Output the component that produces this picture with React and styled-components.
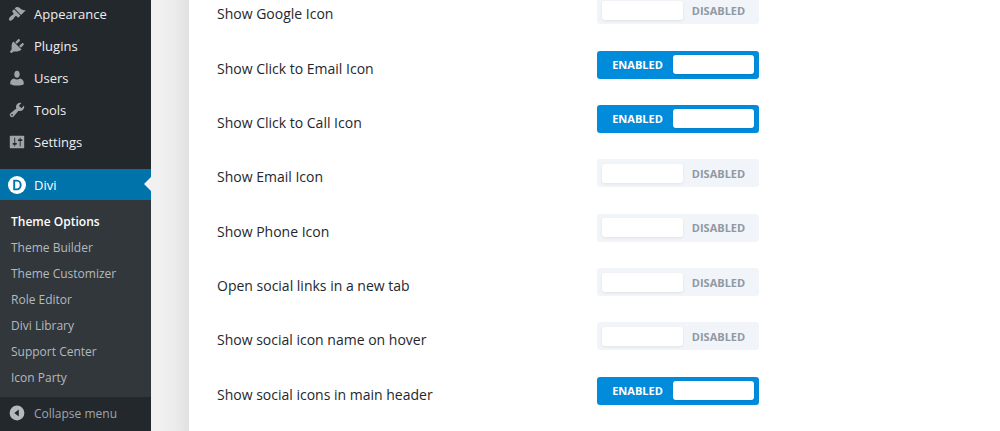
import React from "react";

import styled, { createGlobalStyle } from "styled-components";

const GlobalStyle = createGlobalStyle`
  *, *::before, *::after {
    box-sizing: border-box;
  }

  body {
    margin: 0;
    background: #f1f1f1;
    font-family: "Open Sans", "Noto Sans", sans-serif;
    overflow: hidden;
  }
`;

const Page = styled.div`
  display: flex;
  min-height: 100vh;
`;

const Sidebar = styled.nav`
  flex: 0 0 151px;
  background: #23282d;
  margin-top: -2px;
`;

const MenuList = styled.ul`
  list-style: none;
  margin: 0;
  padding: 0 0 11px;
`;

const MenuLink = styled.a`
  display: flex;
  align-items: center;
  gap: 8px;
  height: 32px;
  padding-left: 8px;
  color: #eee;
  font-size: 13px;
  text-decoration: none;

  svg {
    flex: none;
    fill: #a0a5aa;
  }
`;

const CurrentLink = styled(MenuLink)`
  position: relative;
  height: 31px;
  background: #0073aa;
  color: #fff;

  &::after {
    content: "";
    position: absolute;
    right: 0;
    top: 8px;
    border: 7px solid transparent;
    border-left-width: 0;
    border-right-color: #f1f1f1;
  }
`;

const SubMenu = styled.ul`
  list-style: none;
  margin: 0;
  padding: 9px 0 6px;
  background: #32373c;
`;

const SubLink = styled.a`
  display: block;
  padding-left: 11px;
  color: ${({ $current }) => ($current ? "#fff" : "#b4b9be")};
  font-size: 12px;
  font-weight: ${({ $current }) => ($current ? 600 : 400)};
  line-height: 26px;
  text-decoration: none;
`;

const CollapseButton = styled.button`
  display: flex;
  align-items: center;
  gap: 8px;
  width: 100%;
  height: 32px;
  padding: 0 0 0 8px;
  border: 0;
  background: none;
  color: #a0a5aa;
  font-family: inherit;
  font-size: 12px;

  svg {
    flex: none;
    fill: #b4b9be;
  }
`;

const Gutter = styled.div`
  flex: 0 0 38px;
  background: linear-gradient(to right, #f1f1f1 20%, #ebebeb 65%, #e1e1e1);
`;

const Panel = styled.main`
  flex: 1;
  background: #fff;
`;

const OptionList = styled.div`
  display: grid;
  grid-auto-rows: 1fr;
  min-height: 435px;
  margin-top: -17px;
  padding-left: 28px;
`;

const OptionRow = styled.label`
  display: grid;
  grid-template-columns: 380px 1fr;
  align-items: center;
`;

const OptionName = styled.span`
  padding-top: 7px;
  color: #23282d;
  font-size: 14px;
`;

const Switch = styled.span`
  display: flex;
  flex-direction: ${({ $on }) => ($on ? "row-reverse" : "row")};
  align-items: center;
  width: 162px;
  height: 28px;
  padding: 0 5px;
  border-radius: 3px;
  background: ${({ $on }) => ($on ? "#008bdb" : "#f1f4f9")};
  color: ${({ $on }) => ($on ? "#fff" : "#8f99a3")};
  font-size: 11px;
  font-weight: 700;
`;

const SwitchInput = styled.input`
  appearance: none;
  width: 81px;
  height: 19px;
  margin: 0;
  border-radius: 3px;
  background: #fff;
  box-shadow: 0 1px 3px rgba(0, 0, 0, 0.08);
`;

const SwitchText = styled.span`
  flex: 1;
  text-align: center;
`;

const MenuIcon = ({ children }) => (
  <svg width="18" height="18" viewBox="0 0 20 20" aria-hidden="true">
    {children}
  </svg>
);

const menu = [
  {
    label: "Appearance",
    icon: (
      <path d="M14.48 11.06 7.41 3.99l1.5-1.5c.5-.56 2.3-.47 3.51.32 1.21.8 1.43 1.28 2.91 2.1 1.18.64 2.45 1.26 4.45.85zm-.71.71L6.7 4.7 4.93 6.47c-.39.39-.39 1.02 0 1.41l1.06 1.06c.39.39.39 1.03 0 1.42-.6.6-1.43 1.11-2.21 1.69-.35.26-.7.53-1.01.84C1.43 14.23.4 16.08 1.4 17.07c.99 1 2.84-.03 4.18-1.36.31-.31.58-.66.85-1.02.57-.78 1.08-1.61 1.69-2.21.39-.39 1.02-.39 1.41 0l1.06 1.06c.39.39 1.02.39 1.41 0z" />
    ),
  },
  {
    label: "Plugins",
    icon: (
      <path d="M13.11 4.36 9.87 7.6 8 5.73l3.24-3.24c.35-.34 1.05-.2 1.56.32.52.51.66 1.21.31 1.55zm-8 1.77.91-1.12 9.01 9.01-1.19.84c-.71.71-2.63 1.16-3.82 1.16H6.14L4.9 17.26c-.59.59-1.54.59-2.12 0-.59-.58-.59-1.53 0-2.12l1.24-1.24v-3.88c0-1.13.4-3.19 1.09-3.89zm7.26 3.97 3.24-3.24c.34-.35 1.04-.21 1.55.31.52.51.66 1.21.31 1.55l-3.24 3.25z" />
    ),
  },
  {
    label: "Users",
    icon: (
      <path d="M10 9.6c-2 0-3-1.9-3-3.9s1-3.8 3-3.8 3 1.8 3 3.8-1 3.900-3 3.900zM6.700 10.500c1 .8 2.100 1.200 3.300 1.200s2.300-.4 3.300-1.200c2.500.3 4.200 2.200 4.200 4.800v1.400c0 1-3.400 1.700-7.500 1.700s-7.500-.7-7.500-1.700v-1.400c0-2.600 1.700-4.500 4.200-4.800z" />
    ),
  },
  {
    label: "Tools",
    icon: (
      <path d="M16.68 9.77c-1.34 1.34-3.3 1.67-4.95.99l-5.41 6.52c-.99.99-2.59.99-3.58 0s-.99-2.59 0-3.57l6.52-5.42c-.68-1.65-.35-3.61.99-4.95 1.28-1.28 3.12-1.62 4.72-1.06l-2.89 2.89 2.82 2.82 2.86-2.87c.53 1.58.18 3.39-1.08 4.65zM3.81 16.21c.4.39 1.04.39 1.43 0 .4-.4.4-1.04 0-1.43-.39-.4-1.03-.4-1.43 0-.39.39-.39 1.03 0 1.43z" />
    ),
  },
  {
    label: "Settings",
    icon: (
      <path d="M18 16V4c0-.55-.45-1-1-1H3c-.55 0-1 .45-1 1v12c0 .55.45 1 1 1h14c.55 0 1-.45 1-1zM8 11h1c.55 0 1 .45 1 1s-.45 1-1 1H8v1.5c0 .28-.22.5-.5.5s-.5-.22-.5-.5V13H6c-.55 0-1-.45-1-1s.45-1 1-1h1V5.5c0-.28.22-.5.5-.5s.5.22.5.5V11zm5-2h-1c-.55 0-1-.45-1-1s.45-1 1-1h1V5.5c0-.28.22-.5.5-.5s.5.22.5.5V7h1c.55 0 1 .45 1 1s-.45 1-1 1h-1v5.5c0 .28-.22.5-.5.5s-.5-.22-.5-.5V9z" />
    ),
  },
];

const subMenu = [
  "Theme Options",
  "Theme Builder",
  "Theme Customizer",
  "Role Editor",
  "Divi Library",
  "Support Center",
  "Icon Party",
];

const options = [
  { label: "Show Google Icon", on: false },
  { label: "Show Click to Email Icon", on: true },
  { label: "Show Click to Call Icon", on: true },
  { label: "Show Email Icon", on: false },
  { label: "Show Phone Icon", on: false },
  { label: "Open social links in a new tab", on: false },
  { label: "Show social icon name on hover", on: false },
  { label: "Show social icons in main header", on: true },
];

const Option = ({ label, on }) => {
  const [checked, setChecked] = React.useState(on);

  return (
    <OptionRow>
      <OptionName>{label}</OptionName>
      <Switch $on={checked}>
        <SwitchInput
          type="checkbox"
          role="switch"
          checked={checked}
          onChange={() => setChecked(!checked)}
        />
        <SwitchText>{checked ? "ENABLED" : "DISABLED"}</SwitchText>
      </Switch>
    </OptionRow>
  );
};

const App = () => {
  return (
    <Page>
      <GlobalStyle />
      <Sidebar>
        <MenuList>
          {menu.map(({ label, icon }) => (
            <li key={label}>
              <MenuLink href="#">
                <MenuIcon>{icon}</MenuIcon>
                {label}
              </MenuLink>
            </li>
          ))}
        </MenuList>
        <CurrentLink href="#">
          <svg width="18" height="18" viewBox="0 0 18 18" aria-hidden="true">
            <circle cx="9" cy="9" r="9" fill="#fff" />
            <path
              d="M6.2 4.6h2.6a3.9 4.4 0 0 1 0 8.8H6.2z"
              fill="none"
              stroke="#0073aa"
              strokeWidth="1.9"
            />
          </svg>
          Divi
        </CurrentLink>
        <SubMenu>
          {subMenu.map((label, i) => (
            <li key={label}>
              <SubLink href="#" $current={i === 0}>
                {label}
              </SubLink>
            </li>
          ))}
        </SubMenu>
        <CollapseButton type="button">
          <MenuIcon>
            <path
              fillRule="evenodd"
              d="M10 1.8a8.2 8.2 0 1 1 0 16.4 8.2 8.2 0 0 1 0-16.4zM12 6l-5 4 5 4z"
            />
          </MenuIcon>
          Collapse menu
        </CollapseButton>
      </Sidebar>
      <Gutter />
      <Panel>
        <OptionList>
          {options.map((option) => (
            <Option key={option.label} {...option} />
          ))}
        </OptionList>
      </Panel>
    </Page>
  );
};

export default App;
